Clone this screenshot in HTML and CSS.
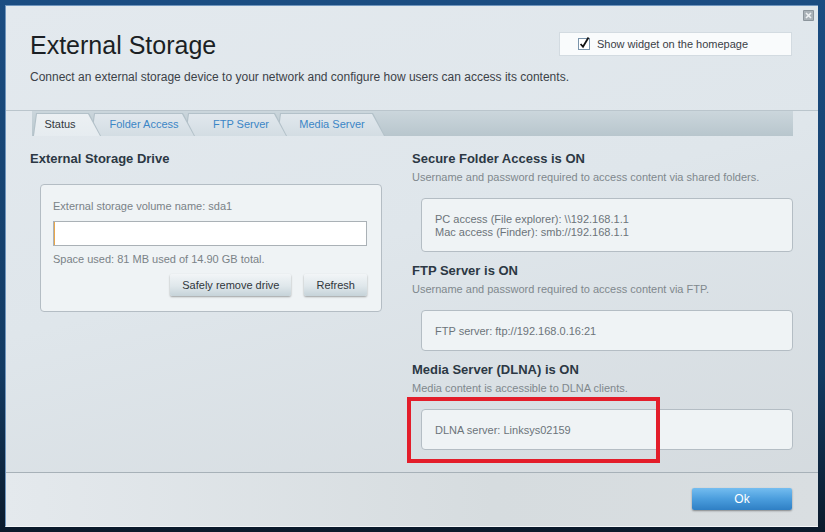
FILE: index.html
```html
<!DOCTYPE html>
<html lang="en">
<head>
    <meta charset="UTF-8">
    <meta name="viewport" content="width=device-width, initial-scale=1.0">
    <title>External Storage</title>
    <link rel="stylesheet" href="styles.css">
</head>
<body>
    <div class="window">
        <a class="close" title="Close">
            <svg width="11" height="11" viewBox="0 0 11 11">
                <rect x="0" y="0" width="11" height="11" rx="1" fill="#8c959c"/>
                <rect x="1" y="1" width="9" height="9" fill="#a9b1b7"/>
                <path d="M3 3 L8 8 M8 3 L3 8" stroke="#eef1f3" stroke-width="1.6"/>
            </svg>
        </a>

        <div class="header">
            <div class="header-top">
                <h1>External Storage</h1>
                <label class="widget-toggle">
                    <svg class="check" width="13" height="14" viewBox="0 0 13 14">
                        <rect x="0.5" y="2.5" width="11" height="11" fill="#fff" stroke="#7a94ab"/>
                        <path d="M2.6 8 L5 10.8 L10.5 1.5" fill="none" stroke="#111" stroke-width="1.8"/>
                    </svg>
                    Show widget on the homepage
                </label>
            </div>
            <p>Connect an external storage device to your network and configure how users can access its contents.</p>
        </div>

        <div class="tabs-row">
            <ul class="tabs">
                <li class="tab active">Status</li>
                <li class="tab">Folder Access</li>
                <li class="tab">FTP Server</li>
                <li class="tab">Media Server</li>
            </ul>
        </div>

        <div class="content">
            <section class="col col-left">
                <h2>External Storage Drive</h2>
                <div class="panel drive">
                    <div class="label">External storage volume name: sda1</div>
                    <input class="field" type="text" value="">
                    <div class="label space">Space used: 81 MB used of 14.90 GB total.</div>
                    <div class="actions">
                        <button class="btn">Safely remove drive</button>
                        <button class="btn">Refresh</button>
                    </div>
                </div>
            </section>

            <section class="col col-right">
                <h2>Secure Folder Access is ON</h2>
                <p class="desc">Username and password required to access content via shared folders.</p>
                <div class="panel info">
                    <div>PC access (File explorer): \\192.168.1.1</div>
                    <div>Mac access (Finder): smb://192.168.1.1</div>
                </div>

                <h2>FTP Server is ON</h2>
                <p class="desc">Username and password required to access content via FTP.</p>
                <div class="panel info">
                    <div>FTP server: ftp://192.168.0.16:21</div>
                </div>

                <h2>Media Server (DLNA) is ON</h2>
                <p class="desc">Media content is accessible to DLNA clients.</p>
                <div class="panel info">
                    <div>DLNA server: Linksys02159</div>
                </div>
            </section>
        </div>

        <div class="footer">
            <button class="btn-ok">Ok</button>
        </div>

        <!-- red marker drawn over the DLNA box -->
        <div class="highlight"></div>
    </div>
</body>
</html>
```

FILE: styles.css
```css
*{
    box-sizing: border-box;
}
html, body{
    margin: 0;
    height: 100%;
}
body{
    background: linear-gradient(#1b4d82, #123a62 70%, #0b1a2b);
    font-family: "Liberation Sans", Arial, sans-serif;
    padding: 5px 7px 5px 5px;
}
.window{
    position: relative;
    height: 522px;
    display: flex;
    flex-direction: column;
    background: linear-gradient(165deg, #e3e9ee 0%, #dfe6eb 45%, #d3d9dd 100%);
    border-top: 1px solid #6f95bd;
    border-left: 1px solid #6f95bd;
    border-bottom: 1px solid #f4f6f8;
}
.close{
    position: absolute;
    top: 4px;
    right: 4px;
    line-height: 0;
}

/* header */
.header{
    padding: 24px 26px 26px 24px;
}
.header-top{
    display: flex;
    justify-content: space-between;
    align-items: flex-start;
}
.header h1{
    margin: 0;
    font-size: 25px;
    line-height: 30px;
    font-weight: 400;
    color: #1b1f24;
}
.header p{
    margin: 10px 0 0;
    font-size: 12px;
    line-height: 14px;
    color: #3c4248;
}
.widget-toggle{
    display: flex;
    align-items: center;
    gap: 6px;
    width: 233px;
    height: 24px;
    margin-top: 2px;
    padding-left: 18px;
    background: #f9fbfc;
    border: 1px solid #d3dbe1;
    font-size: 11px;
    color: #3a4046;
}
.widget-toggle .check{
    margin-top: -3px;
}

/* tabs */
.tabs-row{
    border-top: 1px solid #bac5cc;
    padding: 0 25px 0 26px;
}
.tabs{
    display: flex;
    align-items: flex-end;
    height: 25px;
    margin: 0;
    padding: 0 0 0 1px;
    list-style: none;
    background: linear-gradient(#cbd6dc, #b8c6cd);
}
.tab{
    position: relative;
    isolation: isolate;
    height: 23px;
    margin-left: -10px;
    padding-left: 10px;
    line-height: 23px;
    text-align: center;
    font-size: 11px;
    color: #3b86c6;
    background: #b3c1c9;
    clip-path: polygon(0 100%, 3px 0, calc(100% - 12px) 0, 100% 100%);
}
.tab::before{
    content: "";
    position: absolute;
    inset: 1px 1px 0 1px;
    background: linear-gradient(#e1e8ed, #d3dde3);
    clip-path: polygon(0 100%, 3px 0, calc(100% - 12px) 0, 100% 100%);
    z-index: -1;
}
.tab:nth-child(1){ width: 68px; margin-left: 0; padding-left: 0; padding-right: 14px; z-index: 4; }
.tab:nth-child(2){ width: 104px; padding-right: 8px; z-index: 3; }
.tab:nth-child(3){ width: 102px; z-index: 2; }
.tab:nth-child(4){ width: 108px; padding-right: 8px; z-index: 1; }
.tab.active{
    color: #32383e;
}
.tab.active::before{
    background: linear-gradient(#ecf0f3, #e6ecf0);
}

/* content */
.content{
    flex: 1;
    display: grid;
    grid-template-columns: 382px 381px;
    padding: 15px 25px 0 24px;
}
.col h2{
    margin: 0;
    font-size: 13px;
    line-height: 16px;
    font-weight: 700;
    color: #2c3844;
}
.panel{
    background: #eff3f5;
    border: 1px solid #b4bdc4;
    border-radius: 4px;
    font-size: 11px;
    line-height: 13px;
    color: #6c747a;
}
.drive{
    width: 342px;
    margin: 17px 0 0 10px;
    padding: 15px 13px 15px 12px;
}
.drive .label{
    color: #7a8287;
}
.field{
    display: block;
    width: 314px;
    height: 25px;
    margin: 8px 0 7px;
    border: 1px solid #aab1b6;
    background: #fff;
    box-shadow: inset 1px 0 0 #e9a64a;
    outline: none;
}
.actions{
    display: flex;
    justify-content: flex-end;
    gap: 13px;
    margin-top: 8px;
    padding-right: 1px;
}
.btn{
    height: 22px;
    padding: 0 12px;
    border: none;
    border-radius: 2px;
    background: linear-gradient(#f2f5f7, #dfe7eb 55%, #c6d3d9);
    box-shadow: 0 1px 2px rgba(0, 0, 0, .35);
    font-family: "Liberation Sans", Arial, sans-serif;
    font-size: 11px;
    color: #30363b;
}
.desc{
    margin: 4px 0 14px;
    font-size: 11px;
    line-height: 13px;
    color: #80888d;
}
.info{
    margin: 0 0 11px 9px;
    padding: 14px 13px 12px;
}

/* footer */
.footer{
    display: flex;
    justify-content: flex-end;
    height: 54px;
    padding: 15px 26px 0 0;
    border-top: 1px solid #a7b1b8;
    background: linear-gradient(90deg, #e4e9ed, #d6dcdf 60%, #d9dee1);
}
.btn-ok{
    width: 100px;
    height: 22px;
    border: none;
    border-radius: 2px;
    background: linear-gradient(#74bdf0, #4a9ddd 50%, #2f7fc4);
    box-shadow: 0 1px 2px rgba(0, 0, 0, .4);
    font-family: "Liberation Sans", Arial, sans-serif;
    font-size: 12px;
    color: #fff;
}

.highlight{
    position: absolute;
    left: 401px;
    top: 391px;
    width: 253px;
    height: 66px;
    border: 4px solid #e31d2a;
    pointer-events: none;
}
```
